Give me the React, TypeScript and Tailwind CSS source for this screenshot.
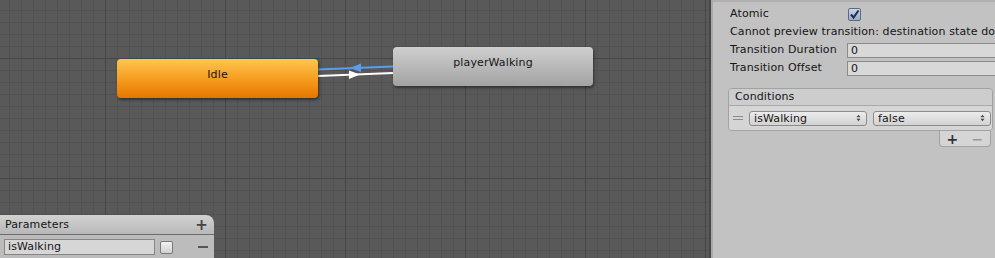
import React from "react";

const font = "font-['DejaVu_Sans',sans-serif] tracking-[0.12px]";

function Dropdown({ label, className }: { label: string; className: string }) {
  return (
    <div
      className={`flex items-center justify-between h-[15px] rounded-[3px] border border-[#8c8c8c] bg-[linear-gradient(to_bottom,#ececec,#d2d2d2)] pl-[4px] pr-[5px] text-[11px] leading-none text-[#151515] ${className}`}
    >
      <span>{label}</span>
      <svg width="5" height="8" viewBox="0 0 5 8">
        <path d="M0.5 3.2 L2.5 0.8 L4.5 3.2 Z" fill="#444" />
        <path d="M0.5 4.8 L2.5 7.2 L4.5 4.8 Z" fill="#444" />
      </svg>
    </div>
  );
}

function Canvas() {
  return (
    <div className="relative w-[709px] h-full overflow-hidden bg-[#595959] bg-[linear-gradient(to_right,#464646_1px,transparent_1px),linear-gradient(to_bottom,#464646_1px,transparent_1px),linear-gradient(to_right,#525252_1px,transparent_1px),linear-gradient(to_bottom,#525252_1px,transparent_1px)] bg-[size:120px_120px,120px_120px,12px_12px,12px_12px] bg-[position:105px_58px,105px_58px,9px_10px,9px_10px]">
      {/* transitions */}
      <svg className="absolute left-0 top-0" width="709" height="258">
        <line x1="393" y1="66.5" x2="318" y2="69.5" stroke="#5a9ded" strokeWidth="2" />
        <polygon points="350,68 361,63.5 361,72" fill="#5a9ded" />
        <line x1="318" y1="76" x2="393" y2="73" stroke="#ffffff" strokeWidth="2" />
        <polygon points="360,74.5 349,70.5 349,79" fill="#ffffff" />
      </svg>

      {/* states */}
      <div className="absolute left-[393px] top-[47px] w-[200px] h-[39px] rounded-[4px] bg-[linear-gradient(to_bottom,#cfcfcf,#a2a2a2)] shadow-[1px_2px_3px_rgba(0,0,0,0.45)] pt-[8px] text-center text-[11px] text-[#151515]">
        playerWalking
      </div>
      <div className="absolute left-[117px] top-[59px] w-[201px] h-[39px] rounded-[4px] bg-[linear-gradient(to_bottom,#ffc650,#f59a1c_55%,#e57600)] shadow-[1px_2px_3px_rgba(0,0,0,0.45)] pt-[8px] text-center text-[11px] text-[#1a1208]">
        Idle
      </div>

      {/* parameters */}
      <div className="absolute left-0 bottom-0 w-[214px] h-[43px] flex flex-col rounded-tr-[8px] overflow-hidden">
        <div className="h-[20px] flex items-center justify-between pl-[5px] pr-[6px] pt-[2px] bg-[linear-gradient(to_bottom,#d2d2d2,#b8b8b8)] border-b border-[#6e6e6e] text-[11px] text-[#151515]">
          <span>Parameters</span>
          <span className="text-[15px] font-bold leading-none text-[#444]">+</span>
        </div>
        <div className="flex-1 flex items-center gap-[5px] pl-[4px] pr-[6px] pt-[1px] bg-[#bcbcbc]">
          <div className="w-[151px] h-[16px] border border-[#858585] bg-[#d6d6d6] pl-[3px] text-[11px] leading-[14px] text-[#151515]">
            isWalking
          </div>
          <div className="w-[13px] h-[13px] rounded-[2px] border border-[#7a7a7a] bg-[linear-gradient(to_bottom,#f2f2f2,#d0d0d0)]" />
          <div className="ml-auto w-[10px] h-[2px] bg-[#555]" />
        </div>
      </div>
    </div>
  );
}

function Inspector() {
  return (
    <div className="flex-1 h-full bg-[#c2c2c2] text-[11px] text-[#141414] overflow-hidden">
      <div className="h-[2px] bg-[#b0b0b0]" />
      <div className="pl-[17px] pt-[3px]">
        <div className="h-[18px] flex items-center">
          <span className="w-[118px]">Atomic</span>
          <div className="w-[13px] h-[13px] rounded-[2px] border border-[#5e6a7c] bg-[linear-gradient(to_bottom,#c9d6ea,#98abc8)] flex items-center justify-center">
            <svg width="11" height="11" viewBox="0 0 11 11">
              <path d="M2 5.5 L4.5 8.5 L9.5 1.5" stroke="#1d2b52" strokeWidth="2" fill="none" />
            </svg>
          </div>
        </div>
        <div className="h-[18px] flex items-center whitespace-nowrap overflow-hidden">
          Cannot preview transition: destination state does not have motion
        </div>
        <div className="h-[18px] flex items-center">
          <span className="w-[117px] shrink-0">Transition Duration</span>
          <div className="w-[200px] shrink-0 h-[15px] border border-[#8a8a8a] bg-[#d8d8d8] pl-[3px] leading-[13px]">0</div>
        </div>
        <div className="h-[18px] flex items-center">
          <span className="w-[117px] shrink-0">Transition Offset</span>
          <div className="w-[200px] shrink-0 h-[15px] border border-[#8a8a8a] bg-[#d8d8d8] pl-[3px] leading-[13px]">0</div>
        </div>
      </div>

      <div className="ml-[15px] mt-[11px] w-[265px]">
        <div className="rounded-[4px] border border-[#a2a2a2] overflow-hidden">
          <div className="h-[17px] flex items-center pl-[6px] pt-[1px] bg-[#cdcdcd] border-b border-[#a8a8a8]">
            Conditions
          </div>
          <div className="h-[24px] flex items-center gap-[6px] pl-[4px] bg-[#d5d5d5]">
            <div className="flex flex-col gap-[2px] w-[10px]">
              <div className="h-px bg-[#8a8a8a]" />
              <div className="h-px bg-[#8a8a8a]" />
            </div>
            <Dropdown label="isWalking" className="w-[118px]" />
            <Dropdown label="false" className="w-[118px]" />
          </div>
        </div>
        <div className="ml-auto mr-[2px] w-[52px] h-[16px] flex items-center justify-around rounded-b-[4px] border border-t-0 border-[#a2a2a2] bg-[#d5d5d5]">
          <span className="text-[14px] font-bold leading-none text-[#333]">+</span>
          <span className="text-[14px] font-bold leading-none text-[#9a9a9a]">−</span>
        </div>
      </div>
    </div>
  );
}

export default function App() {
  return (
    <div className={`flex w-[995px] h-[258px] overflow-hidden ${font}`}>
      <Canvas />
      <div className="w-[2px] h-full bg-[#474747]" />
      <div className="w-[2px] h-full bg-[#a9a9a9]" />
      <Inspector />
    </div>
  );
}
